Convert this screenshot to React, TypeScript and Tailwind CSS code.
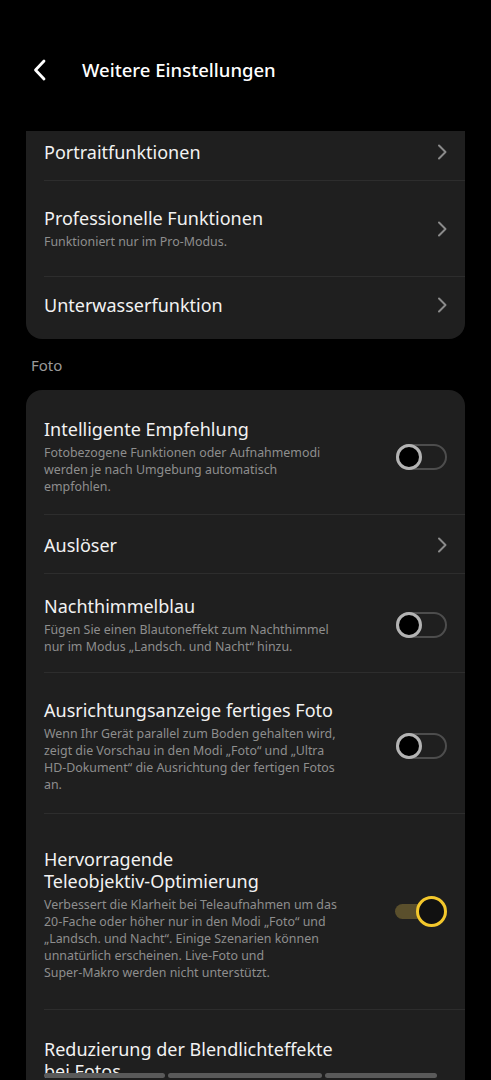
import React from "react";

const font = { fontFamily: '"Noto Sans", "Open Sans", sans-serif' };

function Chevron() {
  return (
    <svg width="10" height="16" viewBox="0 0 10 16" className="shrink-0">
      <polyline points="2,1.5 8.5,8 2,14.5" fill="none" stroke="#8a8a8a" strokeWidth="2" strokeLinecap="round" strokeLinejoin="round" />
    </svg>
  );
}

function ToggleOff() {
  return (
    <div className="relative w-[51px] h-[26px] shrink-0 rounded-full border-2 border-[#4d4d4d]">
      <div className="absolute left-[-2px] top-[-2px] w-[26px] h-[26px] rounded-full border-[3px] border-[#b3b3b3] bg-black" />
    </div>
  );
}

function ToggleOn() {
  return (
    <div className="relative w-[52px] h-[31px] shrink-0 mb-[6px]">
      <div className="absolute left-0 top-[8px] w-[38px] h-[15px] rounded-full bg-[#5a4f2c]" />
      <div className="absolute right-0 top-0 w-[31px] h-[31px] rounded-full border-[3px] border-[#f4c82c] bg-[#111]" />
    </div>
  );
}

function Divider() {
  return <div className="ml-[18px] h-px bg-[#2d2d2d]" />;
}

function Row({
  title,
  desc,
  right,
  pt,
  pb,
}: {
  title: React.ReactNode;
  desc?: React.ReactNode;
  right: React.ReactNode;
  pt: string;
  pb: string;
}) {
  return (
    <div className={`flex items-center justify-between pl-[18px] pr-[18px] ${pt} ${pb}`}>
      <div className="flex flex-col">
        <div className="text-[18px] leading-[22px] text-[#f2f2f2] whitespace-nowrap">{title}</div>
        {desc && (
          <div className="mt-[4px] text-[12.4px] leading-[17px] text-[#8e8e8e] whitespace-nowrap">{desc}</div>
        )}
      </div>
      {right}
    </div>
  );
}

export default function App() {
  return (
    <div className="relative w-[491px] h-[1080px] overflow-hidden bg-black" style={font}>
      <header className="h-[131px] flex items-start pt-[58px] pl-[33px]">
        <svg width="14" height="22" viewBox="0 0 14 22" className="mt-[1px]">
          <polyline points="11,2 2.5,11 11,20" fill="none" stroke="#fff" strokeWidth="2.8" strokeLinecap="round" strokeLinejoin="round" />
        </svg>
        <h1 className="ml-[35px] text-[18.5px] leading-[24px] font-medium text-white">Weitere Einstellungen</h1>
      </header>

      <div className="mx-[26px] rounded-b-[16px] bg-[#1f1f1f]">
        <div className="h-[49px] flex items-center justify-between pl-[18px] pr-[18px] pb-[7px]">
          <span className="text-[18px] leading-[22px] text-[#f2f2f2]">Portraitfunktionen</span>
          <Chevron />
        </div>
        <Divider />
        <Row
          title="Professionelle Funktionen"
          desc="Funktioniert nur im Pro-Modus."
          right={<Chevron />}
          pt="pt-[26px]"
          pb="pb-[26px]"
        />
        <Divider />
        <div className="h-[62px] flex items-center justify-between pl-[18px] pr-[18px] pb-[7px]">
          <span className="text-[18px] leading-[22px] text-[#f2f2f2]">Unterwasserfunktion</span>
          <Chevron />
        </div>
      </div>

      <div className="pl-[31px] mt-[16px] mb-[15px] text-[15px] leading-[20px] text-[#9a9a9a]">Foto</div>

      <div className="mx-[26px] rounded-[16px] bg-[#1f1f1f]">
        <Row
          title="Intelligente Empfehlung"
          desc={
            <>
              Fotobezogene Funktionen oder Aufnahmemodi
              <br />
              werden je nach Umgebung automatisch
              <br />
              empfohlen.
            </>
          }
          right={<ToggleOff />}
          pt="pt-[28px]"
          pb="pb-[19px]"
        />
        <Divider />
        <div className="h-[58px] flex items-center justify-between pl-[18px] pr-[18px] pt-[2px]">
          <span className="text-[18px] leading-[22px] text-[#f2f2f2]">Auslöser</span>
          <Chevron />
        </div>
        <Divider />
        <Row
          title="Nachthimmelblau"
          desc={
            <>
              Fügen Sie einen Blautoneffekt zum Nachthimmel
              <br />
              nur im Modus „Landsch. und Nacht“ hinzu.
            </>
          }
          right={<ToggleOff />}
          pt="pt-[21px]"
          pb="pb-[17px]"
        />
        <Divider />
        <Row
          title="Ausrichtungsanzeige fertiges Foto"
          desc={
            <>
              Wenn Ihr Gerät parallel zum Boden gehalten wird,
              <br />
              zeigt die Vorschau in den Modi „Foto“ und „Ultra
              <br />
              HD-Dokument“ die Ausrichtung der fertigen Fotos
              <br />
              an.
            </>
          }
          right={<ToggleOff />}
          pt="pt-[26px]"
          pb="pb-[20px]"
        />
        <Divider />
        <Row
          title={
            <>
              Hervorragende
              <br />
              Teleobjektiv-Optimierung
            </>
          }
          desc={
            <>
              Verbessert die Klarheit bei Teleaufnahmen um das
              <br />
              20-Fache oder höher nur in den Modi „Foto“ und
              <br />
              „Landsch. und Nacht“. Einige Szenarien können
              <br />
              unnatürlich erscheinen. Live-Foto und
              <br />
              Super-Makro werden nicht unterstützt.
            </>
          }
          right={<ToggleOn />}
          pt="pt-[34px]"
          pb="pb-[28px]"
        />
        <Divider />
        <Row
          title={
            <>
              Reduzierung der Blendlichteffekte
              <br />
              bei Fotos
            </>
          }
          right={<span />}
          pt="pt-[28px]"
          pb="pb-[40px]"
        />
      </div>

      <div className="absolute left-[44px] top-[1073px] flex gap-[3px]">
        <div className="w-[121px] h-[5px] rounded-full bg-[#5a5a5a]" />
        <div className="w-[154px] h-[5px] rounded-full bg-[#5a5a5a]" />
        <div className="w-[112px] h-[5px] rounded-full bg-[#5a5a5a]" />
      </div>
    </div>
  );
}
